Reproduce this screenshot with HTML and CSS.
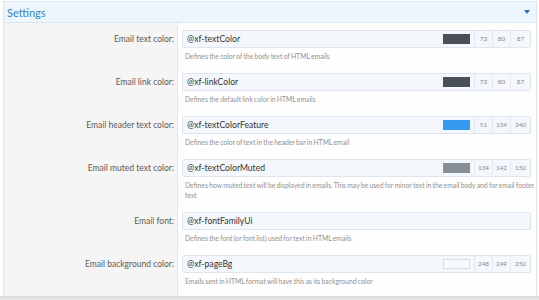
FILE: index.html
```html
<!DOCTYPE html>
<html lang="en">
<head>
    <meta charset="UTF-8">
    <meta name="viewport" content="width=device-width, initial-scale=1.0">
    <title>Email style properties</title>
    <link rel="stylesheet" href="styles.css">
</head>
<body>
    <div class="block">
        <h2 class="block-header">
            <span>Settings</span>
            <span class="toggle"></span>
        </h2>
        <div class="block-body">
            <dl class="form-row">
                <dt>Email text color:</dt>
                <dd>
                    <div class="input-group">
                        <span class="input-text">@xf-textColor</span>
                        <span class="swatch-box"><span class="swatch" style="background: rgb(73, 80, 87);"></span></span>
                        <span class="rgb">73</span><span class="rgb">80</span><span class="rgb">87</span>
                    </div>
                    <div class="explain">Defines the color of the body text of HTML emails</div>
                </dd>
            </dl>
            <dl class="form-row">
                <dt>Email link color:</dt>
                <dd>
                    <div class="input-group">
                        <span class="input-text">@xf-linkColor</span>
                        <span class="swatch-box"><span class="swatch" style="background: rgb(73, 80, 87);"></span></span>
                        <span class="rgb">73</span><span class="rgb">80</span><span class="rgb">87</span>
                    </div>
                    <div class="explain">Defines the default link color in HTML emails</div>
                </dd>
            </dl>
            <dl class="form-row">
                <dt>Email header text color:</dt>
                <dd>
                    <div class="input-group">
                        <span class="input-text">@xf-textColorFeature</span>
                        <span class="swatch-box"><span class="swatch" style="background: rgb(51, 154, 240);"></span></span>
                        <span class="rgb">51</span><span class="rgb">154</span><span class="rgb">240</span>
                    </div>
                    <div class="explain">Defines the color of text in the header bar in HTML email</div>
                </dd>
            </dl>
            <dl class="form-row">
                <dt>Email muted text color:</dt>
                <dd>
                    <div class="input-group">
                        <span class="input-text">@xf-textColorMuted</span>
                        <span class="swatch-box"><span class="swatch" style="background: rgb(134, 142, 150);"></span></span>
                        <span class="rgb">134</span><span class="rgb">142</span><span class="rgb">150</span>
                    </div>
                    <div class="explain">Defines how muted text will be displayed in emails. This may be used for minor text in the email body and for email footer text</div>
                </dd>
            </dl>
            <dl class="form-row">
                <dt>Email font:</dt>
                <dd>
                    <div class="input-group">
                        <span class="input-text">@xf-fontFamilyUi</span>
                    </div>
                    <div class="explain">Defines the font (or font list) used for text in HTML emails</div>
                </dd>
            </dl>
            <dl class="form-row">
                <dt>Email background color:</dt>
                <dd>
                    <div class="input-group">
                        <span class="input-text">@xf-pageBg</span>
                        <span class="swatch-box"><span class="swatch light" style="background: rgb(248, 249, 250);"></span></span>
                        <span class="rgb">248</span><span class="rgb">249</span><span class="rgb">250</span>
                    </div>
                    <div class="explain">Emails sent in HTML format will have this as its background color</div>
                </dd>
            </dl>
            <dl class="form-row">
                <dt></dt>
                <dd>
                    <div class="input-group"></div>
                </dd>
            </dl>
        </div>
    </div>

    <div class="submit-row"></div>
</body>
</html>
```

FILE: styles.css
```css
body {
    font-family: Lato, "Liberation Sans", sans-serif;
    background-color: #ffffff;
    margin: 0;
    padding: 1px 2px 0 3px;
    overflow: hidden;
}

.block {
    border: 1px solid #dfe5ec;
    border-bottom: none;
    background: #fefefe;
}

.block-header {
    display: flex;
    justify-content: space-between;
    align-items: center;
    margin: 0;
    height: 20px;
    padding: 0 6px 0 3px;
    background: #edf5fd;
    border-bottom: 1px solid #dae5f0;
    color: #3a86c8;
    font-size: 11px;
    font-weight: normal;
}

.toggle {
    width: 0;
    height: 0;
    border-left: 3.5px solid transparent;
    border-right: 3.5px solid transparent;
    border-top: 4px solid #2f6fae;
}

.form-row {
    display: grid;
    grid-template-columns: 174px 1fr;
    margin: 0;
}

.form-row dt {
    background: #f5f5f5;
    border-right: 1px solid #e6e6e6;
    padding: 7px 3px 5px 0;
    text-align: right;
    line-height: 18px;
    font-size: 8.5px;
    color: #5a5a5a;
}

.form-row dd {
    margin: 0;
    padding: 7px 5px 5px 4px;
}

.input-group {
    display: flex;
    align-items: stretch;
    height: 16px;
    border: 1px solid #dde5ee;
    border-radius: 2px;
    background: #f4f8fc;
}

.input-text {
    flex: 1;
    padding-left: 4px;
    line-height: 16px;
    font-size: 8.6px;
    color: #333333;
}

.swatch-box {
    display: flex;
    align-items: center;
    padding-right: 4px;
}

.swatch {
    display: block;
    width: 27px;
    height: 10px;
}

.swatch.light {
    box-sizing: border-box;
    border: 1px solid #d6dde5;
}

.rgb {
    width: 17px;
    border-left: 1px solid #e3e9f0;
    text-align: center;
    line-height: 16px;
    font-size: 6.4px;
    color: #8a8a8a;
}

.rgb:last-child {
    width: 19px;
}

.explain {
    margin-top: 3px;
    margin-right: -4px;
    line-height: 10px;
    font-size: 6.8px;
    word-spacing: -0.5px;
    color: #929292;
    padding-left: 3px;
}

.submit-row {
    position: fixed;
    left: 0;
    right: 0;
    bottom: 0;
    height: 4px;
    background: linear-gradient(#d9d9d9, #ececec);
}
```
